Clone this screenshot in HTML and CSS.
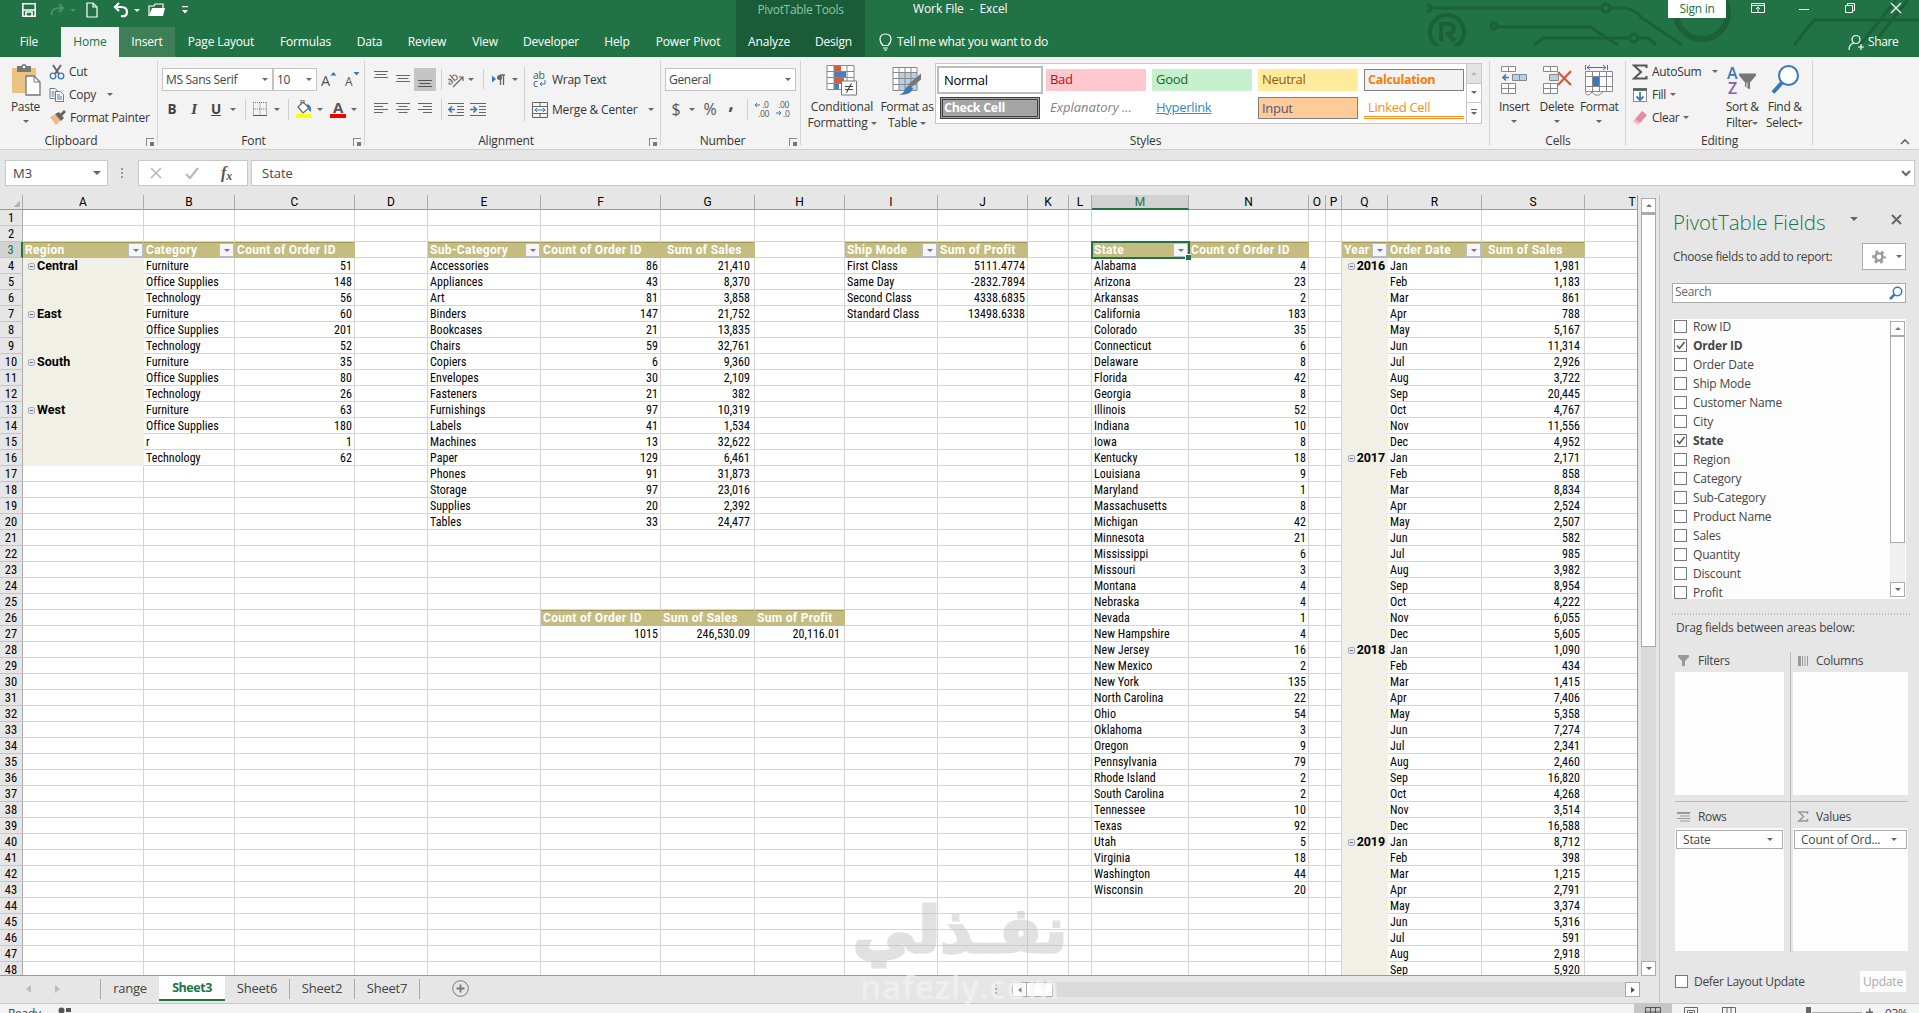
FILE: index.html
```html
<!DOCTYPE html>
<html lang="en">
<head>
<meta charset="utf-8">
<title>Work File - Excel</title>
<link rel="stylesheet" href="styles.css">
</head>
<body>
<div class="app">
  <header class="top">
    <svg class="circuit" width="492" height="46" viewBox="1427 0 492 46" fill="none" stroke="#1b6039" stroke-width="3">
      <circle cx="1428" cy="8" r="3"/><path d="M1432 8H1602M1610 8h16q9 2 16 10l40 27"/><circle cx="1606" cy="8" r="4"/>
      <circle cx="1447" cy="32" r="17" stroke-width="4"/><path d="M1441 41V24h8q6 1 5 6q-1 3-6 4l7 7" stroke-width="4"/>
      <circle cx="1494" cy="26" r="3"/><path d="M1498 27H1590l28 18M1534 45l9-7H1630M1640 38h8l8 7"/><circle cx="1634" cy="38" r="4"/>
      <circle cx="1702" cy="13" r="26" stroke-width="6"/><path d="M1794 45l20-25h105M1860 45l36-45M1872 45l36-45"/>
    </svg>
    <div class="titlebar">
      <div class="qat">
        <svg width="16" height="16" viewBox="0 0 16 16" fill="none" stroke="#fff" stroke-width="1.600"><path d="M1.800 1.800h12.400v12.400H1.800zM2 8h12M5 14v-4h6v4"/></svg>
        <svg width="16" height="16" viewBox="0 0 16 16" fill="none" stroke="#4e9068" stroke-width="2"><path d="M2 13q-2-8 11-7M9 2l4 4-4 4"/></svg>
        <i class="caret dim"></i>
        <svg width="16" height="16" viewBox="0 0 16 16" fill="none" stroke="#fff" stroke-width="1.200"><path d="M3 1h6l4 4v10H3zM9 1v4h4"/></svg>
        <svg width="16" height="16" viewBox="0 0 16 16" fill="none" stroke="#fff" stroke-width="2.200"><path d="M2 5h6q6 0 6 5t-6 4M6 1L2 5l4 4"/></svg>
        <i class="caret light"></i>
        <svg width="18" height="16" viewBox="0 0 18 16"><path d="M1 14V4h5l1-2h8v4" fill="none" stroke="#fff" stroke-width="1.200"/><path d="M4 6h13l-2 8H1z" fill="#fff"/></svg>
        <svg width="8" height="10" viewBox="0 0 8 10" fill="#fff"><path d="M1 1h6v1.300H1zM1 5h6L4 8.500z"/></svg>
      </div>
      <div class="tools-title">PivotTable Tools</div>
      <div class="doc-title">Work File&nbsp; -&nbsp; Excel</div>
      <div class="signin">Sign in</div>
      <div class="winbtns">
        <svg width="14" height="12" viewBox="0 0 14 12" fill="none" stroke="#fff"><path d="M.5 1.500h13v9H.5zM.5 3.500h13M7 10V5M5 7l2-2 2 2"/></svg>
        <svg width="12" height="12" viewBox="0 0 12 12" stroke="#fff"><path d="M1 7.500h10"/></svg>
        <svg width="12" height="12" viewBox="0 0 12 12" fill="none" stroke="#fff"><path d="M1.500 3.500h7v7h-7zM3.500 3V1.500h7v7H9"/></svg>
        <svg width="12" height="12" viewBox="0 0 12 12" stroke="#fff" stroke-width="1.200"><path d="M1 1l10 10M11 1L1 11"/></svg>
      </div>
    </div>
    <nav class="tabs">
      <span>File</span><span class="active">Home</span><span class="hover">Insert</span><span>Page Layout</span><span>Formulas</span><span>Data</span><span>Review</span><span>View</span><span>Developer</span><span>Help</span><span>Power Pivot</span><span class="ctx">Analyze</span><span class="ctx">Design</span>
      <div class="tell"><svg width="13" height="18" viewBox="0 0 13 18" fill="none" stroke="#fff" stroke-width="1.200"><path d="M4 12.500Q1 9.500 1 6.500q0-5.500 5.500-5.500T12 6.500q0 3-3 6zM4 15h5M5 17h3"/></svg>Tell me what you want to do</div>
      <div class="share"><svg width="17" height="17" viewBox="0 0 17 17" fill="none" stroke="#fff" stroke-width="1.200"><circle cx="8" cy="5.500" r="4"/><path d="M1 16q0-6 5-7M13 10v6M10 13h6"/></svg>Share</div>
    </nav>
  </header>

  <section class="ribbon">
    <div class="group g-clip">
      <div class="body">
        <div class="big">
          <svg width="30" height="32" viewBox="0 0 30 32"><path d="M1 4h24v25H1z" fill="#eac282"/><path d="M6 2h4q3-4 6 0h4v6H6z" fill="#777"/><circle cx="13" cy="3" r="1.300" fill="#fff"/><path d="M15 12h8l6 6v13H15z" fill="#fff" stroke="#777" stroke-width="1.300"/><path d="M23 12v6h6" fill="none" stroke="#777"/></svg>
          <span>Paste</span><i class="caret"></i>
        </div>
        <div class="stack">
          <div class="cmd"><svg width="16" height="16" viewBox="0 0 16 16" fill="none"><path d="M4 1l6 9M12 1L6 10" stroke="#666" stroke-width="2"/><circle cx="4" cy="12" r="2.800" stroke="#3b78b5" stroke-width="1.300"/><circle cx="12" cy="12" r="2.800" stroke="#3b78b5" stroke-width="1.300"/></svg>Cut</div>
          <div class="cmd"><svg width="16" height="16" viewBox="0 0 16 16" fill="#fff" stroke="#777"><path d="M1 1.500h5l3 3v7H1z"/><path d="M6.500 4.500h5l3 3v7h-8z"/><path d="M2.500 5h3M2.500 7h3M2.500 9h3M8 8h3M8 10h5M8 12h5" stroke="#3b78b5"/></svg>Copy<i class="caret gap"></i></div>
          <div class="cmd"><svg width="17" height="16" viewBox="0 0 17 16"><path d="M1 7l6-3 5 6-5 5z" fill="#eeb888"/><path d="M6 4l4-2 5 6-3 3z" fill="#666"/><path d="M11 4l4-4 2 2-4 4z" fill="#666"/></svg>Format Painter</div>
        </div>
      </div>
      <div class="label">Clipboard</div><i class="launch"></i>
    </div>

    <div class="group g-font">
      <div class="line l-font1">
        <div class="combo">MS Sans Serif<i class="caret"></i></div>
        <div class="combo">10<i class="caret"></i></div>
        <svg width="16" height="18" viewBox="0 0 16 18"><text x="0" y="15" font-size="14.500" class="glyph">A</text><path d="M9.500 4.500L12.500 1l3 3.500z" fill="#3b78b5"/></svg>
        <svg width="16" height="18" viewBox="0 0 16 18"><text x="1" y="15" font-size="12" class="glyph">A</text><path d="M9.500 1h6l-3 3.500z" fill="#3b78b5"/></svg>
      </div>
      <div class="line l-font2">
        <b class="fmt">B</b><i class="fmt it">I</i><b class="fmt un">U</b><i class="caret"></i><i class="sep"></i>
        <svg width="14" height="14" viewBox="0 0 14 14" fill="none" stroke="#777" stroke-dasharray="1 1"><path d="M.5.500v13M7 .5v13M13.500.500v13M0 .5h14M0 7h14"/><path d="M0 13.500h14" stroke-dasharray="none" stroke="#555"/></svg>
        <i class="caret"></i><i class="sep"></i>
        <svg width="17" height="18" viewBox="0 0 17 18"><path d="M3 7l5-5 6 6-6 5z" fill="#fff" stroke="#666" stroke-width="1.200"/><path d="M6 5V0h3v4" fill="none" stroke="#666"/><path d="M12 4q5 1 4 8q-4-3-4-8z" fill="#3b78b5"/><path d="M1 14h15v4H1z" fill="#ff0"/></svg>
        <i class="caret"></i>
        <svg width="16" height="18" viewBox="0 0 16 18"><text x="3" y="12.500" font-size="15" class="glyph bold">A</text><path d="M0 14h16v4H0z" fill="#f00000"/></svg>
        <i class="caret"></i>
      </div>
      <div class="label">Font</div><i class="launch"></i>
    </div>

    <div class="group g-align">
      <div class="split">
        <div class="left">
          <div class="line l-al1">
            <svg width="14" height="17" viewBox="0 0 14 17" stroke="#666"><path d="M0 .5h14M1.500 3.500h11M0 6.500h14"/></svg>
            <svg width="14" height="17" viewBox="0 0 14 17" stroke="#666"><path d="M0 4.500h14M1.500 7.500h11M0 10.500h14"/></svg>
            <div class="pressed"><svg width="14" height="17" viewBox="0 0 14 17" stroke="#555"><path d="M0 9.500h14M1.500 12.500h11M0 15.500h14"/></svg></div>
            <i class="sep"></i>
            <svg width="17" height="16" viewBox="0 0 17 16"><text x="-2" y="10" font-size="11" class="glyph" transform="rotate(-40 5 7)">ab</text><path d="M5 15L15 5M11 5h4v4" fill="none" stroke="#666" stroke-width="1.200"/></svg>
            <i class="caret"></i><i class="sep"></i>
            <svg width="14" height="12" viewBox="0 0 14 12"><path d="M0 1.500l4 3.500-4 3.500z" fill="#3b78b5"/><path d="M8.500 1v10M11.500 1v10M13 1H8" stroke="#666" fill="none" stroke-width="1.300"/><circle cx="7.500" cy="3.500" r="2.500" fill="#666"/></svg>
            <i class="caret"></i>
          </div>
          <div class="line l-al2">
            <svg width="14" height="12" viewBox="0 0 14 12" stroke="#666"><path d="M0 .5h14M0 3.500h9M0 6.500h14M0 9.500h9"/></svg>
            <svg width="14" height="12" viewBox="0 0 14 12" stroke="#666"><path d="M0 .5h14M2.500 3.500h9M0 6.500h14M2.500 9.500h9"/></svg>
            <svg width="14" height="12" viewBox="0 0 14 12" stroke="#666"><path d="M0 .5h14M5 3.500h9M0 6.500h14M5 9.500h9"/></svg>
            <i class="sep"></i>
            <svg width="16" height="13" viewBox="0 0 16 13" fill="none" stroke="#666"><path d="M0 .5h16M9 3.500h7M9 6.500h7M9 9.500h7M0 12.500h16"/><path d="M7 6.500H1M4 3.500l-3 3 3 3" stroke="#3b78b5" stroke-width="1.600"/></svg>
            <svg width="16" height="13" viewBox="0 0 16 13" fill="none" stroke="#666"><path d="M0 .5h16M9 3.500h7M9 6.500h7M9 9.500h7M0 12.500h16"/><path d="M0 6.500h6M3.500 3.500l3 3-3 3" stroke="#3b78b5" stroke-width="1.600"/></svg>
          </div>
        </div>
        <i class="sep tall"></i>
        <div class="right">
          <div class="cmd"><svg width="16" height="17" viewBox="0 0 16 17"><text x="1" y="8" font-size="10.500" class="glyph">ab</text><text x="1" y="16" font-size="10.500" class="glyph">c</text><path d="M13 9v4H8M10 11l-2 2 2 2" fill="none" stroke="#3b78b5"/></svg>Wrap Text</div>
          <div class="cmd"><svg width="16" height="16" viewBox="0 0 16 16" fill="none" stroke="#666"><path d="M.5.500h15v15H.5zM.5 4.500h15M.5 11.500h15M8 .5v4M8 11.500v4"/><path d="M2.500 8h11M5 6L3 8l2 2M11 6l2 2-2 2" stroke="#3b78b5"/></svg>Merge &amp; Center<i class="caret gap"></i></div>
        </div>
      </div>
      <div class="label">Alignment</div><i class="launch"></i>
    </div>

    <div class="group g-num">
      <div class="line l-num1"><div class="combo">General<i class="caret"></i></div></div>
      <div class="line l-num2">
        <span class="sym">$</span><i class="caret"></i><span class="sym">%</span><b class="sym comma">,</b><i class="sep"></i>
        <svg width="16" height="16" viewBox="0 0 16 16"><text x="8" y="7" font-size="8.500" class="glyph">.0</text><text x="4" y="15.500" font-size="8.500" class="glyph">.00</text><path d="M6 4H1M3 2L1 4l2 2" fill="none" stroke="#3b78b5"/></svg>
        <svg width="16" height="16" viewBox="0 0 16 16"><text x="3" y="7" font-size="8.500" class="glyph">.00</text><text x="8" y="15.500" font-size="8.500" class="glyph">.0</text><path d="M1 12h5M4 10l2 2-2 2" fill="none" stroke="#3b78b5"/></svg>
      </div>
      <div class="label">Number</div><i class="launch"></i>
    </div>

    <div class="group g-styles">
      <div class="body">
        <div class="big w72">
          <svg width="32" height="31" viewBox="0 0 32 31"><path d="M1 1h27v24H1z" fill="#fff"/><path d="M8 1h7v6H8z" fill="#d9593a"/><path d="M8 7h12v6H8z" fill="#4a80b8"/><path d="M8 13h10v6H8z" fill="#d9593a"/><path d="M8 19h5v6H8z" fill="#4a80b8"/><path d="M1 1h27v24H1zM8 1v24M21 1v24M1 7h27M1 13h27M1 19h27" fill="none" stroke="#888"/><path d="M15.500 16.500h15v14h-15z" fill="#fff" stroke="#777"/><path d="M19 22h8M19 25h8M25.500 19l-5 9" stroke="#444" stroke-width="1.200"/></svg>
          <span>Conditional</span><span>Formatting<i class="caret in"></i></span>
        </div>
        <div class="big w56">
          <svg width="32" height="31" viewBox="0 0 32 31"><path d="M2 3h24v23H2z" fill="#fff"/><path d="M8 8h18v18H8z" fill="#b6d0e6"/><path d="M2 3h24v23H2zM8 3v23M14 3v23M20 3v23M2 8h24M2 14h24M2 20h24" fill="none" stroke="#888"/><path d="M30 9v6L20 23l-3-3z" fill="#777"/><path d="M18 21l4 3q-2 7-14 6q5-1 6-5q1-3 4-4z" fill="#3b78b5"/></svg>
          <span>Format as</span><span>Table<i class="caret in"></i></span>
        </div>
        <div class="gallery">
          <div class="swatches">
            <span class="s normal">Normal</span><span class="s bad">Bad</span><span class="s good">Good</span><span class="s neutral">Neutral</span><span class="s calc">Calculation</span>
            <span class="s check">Check Cell</span><span class="s expl">Explanatory ...</span><span class="s hyper">Hyperlink</span><span class="s input">Input</span><span class="s linked">Linked Cell</span>
          </div>
          <div class="gscroll"><span class="off"><i class="caret up"></i></span><span><i class="caret"></i></span><span class="more"><i class="caret"></i></span></div>
        </div>
      </div>
      <div class="label">Styles</div>
    </div>

    <div class="group g-cells">
      <div class="body">
        <div class="big w42">
          <svg width="28" height="30" viewBox="0 0 28 30" fill="#fff" stroke="#888"><path d="M1.500 1.500h14v5h-14zM8.500 1.500v5M1.500 18.500h14v10h-14zM8.500 18.500v10M1.500 23.500h14"/><path d="M12.500 9.500h14v6h-14zM19.500 9.500v6" fill="#b6cfe3"/><path d="M9 12.500H3M6 9.500l-3 3 3 3" fill="none" stroke="#3b78b5" stroke-width="1.700"/></svg>
          <span>Insert</span><i class="caret"></i>
        </div>
        <div class="big w42">
          <svg width="30" height="30" viewBox="0 0 30 30" fill="#fff" stroke="#888"><path d="M1.500 1.500h14v5h-14zM8.500 1.500v5M1.500 18.500h14v10h-14zM8.500 18.500v10M1.500 23.500h14"/><path d="M7.500 9.500h9v6h-9z" fill="#b6cfe3"/><path d="M16 7l13 13M29 6L16 20" stroke="#d9593a" stroke-width="2.300"/></svg>
          <span>Delete</span><i class="caret"></i>
        </div>
        <div class="big w42">
          <svg width="30" height="32" viewBox="0 0 30 32" fill="#fff" stroke="#888"><path d="M1.500 7.500h27v20h-27zM8.500 7.500v20M15.500 7.500v20M22.500 7.500v20M1.500 12.500h27M1.500 22.500h27"/><path d="M8.500 12.500h7v10h-7z" fill="#3b78b5"/><path d="M2 28q-1 3 3 3l3-3 3 3h4l4-3" /><path d="M1.500 1v5M23.500 1v5M3 3.500h19M6 1L3 3.500 6 6M19 1l3 2.500L19 6" fill="none" stroke="#3b78b5"/></svg>
          <span>Format</span><i class="caret"></i>
        </div>
      </div>
      <div class="label">Cells</div>
    </div>

    <div class="group g-edit">
      <div class="body">
        <div class="stack">
          <div class="cmd"><svg width="16" height="16" viewBox="0 0 16 16" fill="none" stroke="#555" stroke-width="2"><path d="M14.500 4V1.500H2L9 8l-7 6.500h12.500V12"/></svg>AutoSum<i class="caret gap"></i></div>
          <div class="cmd"><svg width="16" height="16" viewBox="0 0 16 16"><path d="M1.500 1.500h13v13h-13z" fill="#fff" stroke="#888"/><path d="M1 1h14v3H1z" fill="#666"/><path d="M8 5v8M4.500 9.500L8 13l3.500-3.500" fill="none" stroke="#3b78b5" stroke-width="1.800"/></svg>Fill<i class="caret in"></i></div>
          <div class="cmd"><svg width="16" height="16" viewBox="0 0 16 16"><path d="M10 1l5 4-7 8-5-4z" fill="#e58a9f"/><path d="M3 9l5 4-2 2-5-4z" fill="#f3b9c5"/></svg>Clear<i class="caret in"></i></div>
        </div>
        <div class="big w42">
          <svg width="30" height="31" viewBox="0 0 30 31"><text x="0" y="14" font-size="16" font-weight="600" fill="#3b78b5">A</text><text x="1" y="29" font-size="16" font-weight="600" fill="#8a5bb0">Z</text><path d="M12 9h17v2l-6 7v7l-5 -3v-4l-6-7z" fill="#777"/><path d="M20 18v5" stroke="#fff"/></svg>
          <span>Sort &amp;</span><span>Filter<i class="caret in"></i></span>
        </div>
        <div class="big w42">
          <svg width="30" height="31" viewBox="0 0 30 31"><circle cx="18.500" cy="11" r="9.500" fill="#fff" stroke="#3b78b5" stroke-width="2"/><path d="M12 18L3 28" stroke="#3b78b5" stroke-width="4"/></svg>
          <span>Find &amp;</span><span>Select<i class="caret in"></i></span>
        </div>
      </div>
      <div class="label">Editing</div>
    </div>
    <svg class="collapse" width="10" height="7" viewBox="0 0 10 7" fill="none" stroke="#666" stroke-width="1.600"><path d="M1 6l4-4 4 4"/></svg>
  </section>

  <section class="fbar">
    <div class="box name">M3<i class="caret big-c"></i></div>
    <svg width="3" height="12" viewBox="0 0 3 12" fill="#999"><path d="M0 1h2v2H0zM0 5h2v2H0zM0 9h2v2H0z"/></svg>
    <div class="box fx">
      <svg width="12" height="12" viewBox="0 0 12 12" stroke="#b9b9b9" stroke-width="1.600"><path d="M1 1l10 10M11 1L1 11"/></svg>
      <svg width="14" height="12" viewBox="0 0 14 12" fill="none" stroke="#b9b9b9" stroke-width="2.200"><path d="M1 7l4 4L13 1"/></svg>
      <span class="fxt">f<sub>x</sub></span>
    </div>
    <div class="box formula">State<svg width="10" height="7" viewBox="0 0 10 7" fill="none" stroke="#666" stroke-width="2"><path d="M1 1l4 4 4-4"/></svg></div>
  </section>

  <main class="work">
    <div class="book">
      <div class="gridrow">
        <div class="viewport"><table class="sheet" id="sheet"></table></div>
        <div class="vscroll"><span class="btn"><i class="caret up"></i></span><span class="thumb"></span><span class="track"></span><span class="btn"><i class="caret"></i></span></div>
      </div>
      <div class="sheetbar">
        <svg class="nav" width="40" height="10" viewBox="0 0 40 10" fill="#bdbdbd"><path d="M9 1v8L4 5zM33 1v8l5-4z"/></svg>
        <div class="sheets"><span>range</span><span class="on">Sheet3</span><span>Sheet6</span><span>Sheet2</span><span>Sheet7</span></div>
        <svg class="plus" width="17" height="17" viewBox="0 0 17 17" fill="none" stroke="#777"><circle cx="8.500" cy="8.500" r="7.800"/><path d="M8.500 4.500v8M4.500 8.500h8" stroke-width="1.800"/></svg>
        <svg class="grip" width="3" height="12" viewBox="0 0 3 12" fill="#aaa"><path d="M0 1h2v2H0zM0 5h2v2H0zM0 9h2v2H0z"/></svg>
        <div class="hscroll"><span class="btn"><i class="caret lf"></i></span><span class="hthumb"></span><span class="track"></span><span class="btn"><i class="caret rt"></i></span></div>
      </div>
      <div class="mark"><div class="mark-ar" lang="ar">نفـذلي</div><div class="mark-en">nafezly.com</div></div>
    </div>

    <aside class="panel">
      <div class="p-head"><h1>PivotTable Fields</h1><i class="caret big-c"></i><svg width="11" height="11" viewBox="0 0 11 11" stroke="#666" stroke-width="2"><path d="M1 1l9 9M10 1l-9 9"/></svg></div>
      <div class="p-choose"><span>Choose fields to add to report:</span><div class="gear"><svg width="14" height="14" viewBox="0 0 14 14" fill="none" stroke="#999"><circle cx="7" cy="7" r="3.600" stroke-width="2.400"/><circle cx="7" cy="7" r="5.700" stroke-width="2.200" stroke-dasharray="3 2.970" stroke-dashoffset="1.500"/></svg><i class="caret big-c"></i></div></div>
      <div class="search">Search<svg width="14" height="14" viewBox="0 0 14 14" fill="none" stroke="#3b78b5"><circle cx="8.500" cy="5.500" r="4.200" stroke-width="1.500"/><path d="M5.500 8.500L1 13" stroke-width="2.500"/></svg></div>
      <div class="fields">
        <ul id="fields"></ul>
        <div class="fscroll"><span class="btn"><i class="caret up"></i></span><span class="fthumb"></span><span class="ftrack"></span><span class="btn"><i class="caret"></i></span></div>
      </div>
      <div class="dots"></div>
      <div class="drag">Drag fields between areas below:</div>
      <div class="areas">
        <div class="area"><h2><svg width="13" height="12" viewBox="0 0 13 12" fill="#999"><path d="M1 0h11v2L8 6v5H5V6L1 2z"/></svg>Filters</h2><div class="drop"></div></div>
        <div class="area r"><h2><svg width="13" height="12" viewBox="0 0 13 12" fill="#999"><path d="M1 1h3v10H1zM5 1h1v10H5zM7.500 1h1v10h-1zM10 1h1v10h-1z"/></svg>Columns</h2><div class="drop"></div></div>
        <div class="area b"><h2><svg width="13" height="12" viewBox="0 0 13 12" fill="#999"><path d="M0 1h13v2H0zM3 4.500h10v1H3zM0 7h13v1H0zM3 9.500h10v1H3z"/></svg>Rows</h2><div class="drop"><div class="pill">State<i class="caret big-c"></i></div></div></div>
        <div class="area r b"><h2><svg width="13" height="12" viewBox="0 0 13 12" fill="none" stroke="#999" stroke-width="1.600"><path d="M10.500 3V1H2l4.500 4.500L2 10h8.500V8"/></svg>Values</h2><div class="drop"><div class="pill">Count of Ord...<i class="caret big-c"></i></div></div></div>
      </div>
      <div class="defer"><i class="cb"></i><span>Defer Layout Update</span><button class="upd">Update</button></div>
    </aside>
  </main>

  <footer class="status">
    <span class="ready">Ready</span>
    <svg width="14" height="10" viewBox="0 0 14 10" fill="#555"><circle cx="3.500" cy="3.500" r="3"/><path d="M8 1h5v4H8zM1 7h12v1H1z"/></svg>
    <div class="views">
      <span class="v on"><svg width="16" height="14" viewBox="0 0 16 14" fill="none" stroke="#555"><path d="M.5.500h15v13H.5zM5.500 0v14M10.500 0v14M0 5h16M0 9.500h16"/></svg></span>
      <span class="v"><svg width="14" height="14" viewBox="0 0 14 14" fill="none" stroke="#666"><path d="M.5.500h13v13H.5zM3.500 3.500h7v10M3.500 3.500v10M5 5.500h4M5 7.500h4"/></svg></span>
      <span class="v"><svg width="14" height="14" viewBox="0 0 14 14" fill="none" stroke="#666"><path d="M.5.500h13v13M.5 0v14M5 .5v7h4v-7"/></svg></span>
    </div>
    <svg class="zoombar" width="80" height="12" viewBox="0 0 80 12" fill="#666"><path d="M4 1h5v10H4zM10 6h50v.6H10zM64 5.500h7v1.500h-7zM67 2.500h1.500v7.500H67z"/></svg>
    <span class="pct">93%</span>
  </footer>
</div>
<script src="sheet.js"></script>
</body>
</html>
```
FILE: styles.css
```css
* { box-sizing: border-box; }
body { margin: 0; font-family: "Open Sans", sans-serif; font-size: 12px; letter-spacing: -.3px; color: #333; background: #e6e6e6; }
i { font-style: normal; }
svg { display: block; flex: none; }
.app { width: 1919px; height: 1013px; overflow: hidden; display: flex; flex-direction: column; }

.caret { display: inline-block; flex: none; width: 0; height: 0; border: 3px solid transparent; border-top: 3.500px solid #666; border-bottom: 0; }
.caret.up { border-bottom: 3.500px solid #777; border-top: 0; }
.caret.lf { border: 3.500px solid transparent; border-right: 4px solid #777; border-left: 0; }
.caret.rt { border: 3.500px solid transparent; border-left: 4px solid #555; border-right: 0; }
.caret.light { border-top-color: #fff; }
.caret.dim { border-top-color: #4e9068; }
.caret.in { margin-left: 3px; vertical-align: 2px; }
.caret.gap { margin-left: 7px; }
.caret.big-c { border-width: 4.500px 4.500px 0; }
.glyph { font-family: "Open Sans", sans-serif; fill: #555; }
.bold { font-weight: 700; }

/* Title bar and tabs */
.top { height: 57px; background: #217346; color: #fff; position: relative; flex: none; }
.circuit { position: absolute; left: 1427px; top: 0; }
.titlebar, .tabs { position: relative; display: flex; }
.titlebar { height: 27px; letter-spacing: -.1px; }
.titlebar > div { flex: none; }
.qat { width: 736px; height: 20px; display: grid; grid-template-columns: 37px 29px 10px 24px 29px 11px 26px 23px; align-items: center; justify-items: end; }
.tools-title { width: 129px; padding-top: 1px; background: #1a5c38; color: #8fc3a5; text-align: center; line-height: 17px; letter-spacing: -.3px; }
.doc-title { width: 803px; padding-left: 48px; line-height: 18px; }
.signin { width: 58px; height: 18px; background: #fff; color: #217346; text-align: center; line-height: 18px; letter-spacing: -.3px; }
.winbtns { display: grid; grid-template-columns: repeat(4, 46px); padding-left: 9px; height: 16px; align-items: center; justify-items: center; }
.tabs { height: 30px; line-height: 30px; letter-spacing: -.15px; }
.tabs > span { text-align: center; flex: none; }
.tabs > span:nth-child(1) { width: 61px; padding-right: 3px; }
.tabs > span:nth-child(2) { width: 58px; }
.tabs > span:nth-child(3) { width: 56px; }
.tabs > span:nth-child(4) { width: 92px; }
.tabs > span:nth-child(5) { width: 77px; }
.tabs > span:nth-child(6) { width: 51px; }
.tabs > span:nth-child(7) { width: 64px; }
.tabs > span:nth-child(8) { width: 52px; }
.tabs > span:nth-child(9) { width: 80px; }
.tabs > span:nth-child(10) { width: 52px; }
.tabs > span:nth-child(11) { width: 93px; padding-right: 3px; }
.tabs > span:nth-child(12) { width: 66px; }
.tabs > span:nth-child(13) { width: 63px; }
.tabs .active { background: #f3f3f3; color: #217346; }
.tabs .hover { background: #3f7f58; }
.tabs .ctx { background: #1a5c38; }
.tell { display: flex; align-items: center; gap: 5px; padding-left: 14px; width: 983px; letter-spacing: -.25px; }
.share { display: flex; align-items: center; gap: 3px; letter-spacing: -.35px; }

/* Ribbon */
.ribbon { height: 93px; flex: none; background: #f3f3f3; border-bottom: 1px solid #cfcfcf; display: flex; position: relative; }
.group { position: relative; flex: none; padding-top: 5px; }
.group::after { content: ""; position: absolute; right: 0; top: 4px; height: 84px; width: 1px; background: #d4d4d4; }
.g-clip { width: 158px; }
.g-font { width: 207px; padding-left: 4px; }
.g-align { width: 296px; }
.g-num { width: 140px; padding-left: 4px; }
.g-styles { width: 689px; padding-left: 4px; }
.g-cells { width: 136px; padding-left: 3px; }
.g-edit { width: 187px; }
.label { position: absolute; left: 0; right: 0; top: 75px; text-align: center; line-height: 18px; letter-spacing: -.15px; }
.g-clip .label { right: 16px; }
.g-font .label { right: 16px; }
.g-align .label { right: 14px; }
.g-num .label { right: 17px; }
.launch { position: absolute; right: 4px; top: 81px; width: 8px; height: 8px; border-left: 1px solid #888; border-top: 1px solid #888; background: linear-gradient(#777, #777) right bottom / 4px 4px no-repeat; }
.body, .split { display: flex; height: 70px; }
.big { display: flex; flex-direction: column; align-items: center; line-height: 16px; padding-top: 2px; white-space: nowrap; }
.big > svg { height: 32px; margin-bottom: 3px; }
.big > .caret { margin-top: 5px; }
.g-clip .big { width: 49px; padding-left: 2px; }
.w72 { width: 74px; letter-spacing: -.15px; } .w56 { width: 56px; } .w42 { width: 42.500px; }
.cmd { display: flex; align-items: center; height: 23px; gap: 4px; white-space: nowrap; }
.stack { margin-top: -2px; }
.g-edit .stack { width: 95px; padding-left: 6px; }
.g-edit .caret.in { margin-left: 0; }
.line { display: grid; align-items: center; justify-items: center; }
.l-font1, .l-num1, .l-al1 { height: 23px; margin-top: 6px; }
.l-font2, .l-num2, .l-al2 { height: 26px; margin-top: 5px; }
.l-font1 { grid-template-columns: 111px 44px 24px 22px; }
.l-font2 { grid-template-columns: 20px 24px 20px 14px 10px 20px 14px 8px 22px 12px 23px 10px; }
.l-al1 { grid-template-columns: 24px 20px 24px 8px 22px 8px 16px 16px 16px; }
.l-al2 { grid-template-columns: 24px 20px 24px 8px 22px 22px; }
.l-num1 { grid-template-columns: 131px; }
.l-num2 { grid-template-columns: 22px 10px 26px 16px 16px 14px 28px; }
.combo { width: 100%; height: 23px; background: #fff; border: 1px solid #c4c4c4; display: flex; align-items: center; justify-content: space-between; padding: 0 4px 0 3px; color: #444; }
.fmt { font-size: 13.500px; color: #444; }
.it { font: italic 600 15px "Liberation Serif", serif; }
.un { text-decoration: underline; }
.sep { width: 1px; height: 21px; background: #d0d0d0; }
.sep.tall { height: 55px; margin-top: 5px; }
.left { width: 159px; padding-left: 4px; }
.right { padding: 6px 0 0 7px; }
.right .cmd { height: 23px; gap: 4px; }
.right .cmd + .cmd { margin-top: 7px; letter-spacing: -.2px; }
.pressed { width: 22px; height: 23px; background: #c5c5c5; display: grid; place-items: center; }
.sym { font-size: 16px; color: #555; }
.comma { font-size: 20px; line-height: 10px; transform: translateY(-7px); }
.gallery { display: flex; width: 547px; height: 61px; margin-top: 1px; border: 1px solid #c6c6c6; background: #fff; }
.swatches { display: grid; grid-template-columns: repeat(5, 100px); grid-template-rows: 22px 22px; gap: 6px; padding: 5px 0 0 4px; width: 531px; }
.s { padding-left: 4px; line-height: 20px; font-size: 13px; white-space: nowrap; }
.normal { background: #fff; color: #000; outline: 2px solid #bcbcbc; outline-offset: 1px; border: 1px solid #fff; padding-left: 3px; }
.bad { background: #ffc7ce; color: #b01020; }
.good { background: #c6efce; color: #126b1c; }
.neutral { background: #ffeb9c; color: #9c5700; }
.calc { background: #f2f2f2; border: 1px solid #7f7f7f; color: #fa7d00; font-weight: 700; padding-left: 3px; font-size: 12.500px; }
.check { background: #a5a5a5; border: 3px double #3f3f3f; color: #fff; font-weight: 700; line-height: 16px; padding-left: 1px; font-size: 12.500px; }
.expl { color: #7f7f7f; font-style: italic; letter-spacing: 0; }
.hyper { color: #2f8ac6; text-decoration: underline; }
.input { background: #ffcc99; border: 1px solid #7f7f7f; color: #5a5376; padding-left: 3px; }
.linked { color: #fa8d20; border-bottom: 3px double #fa8d20; }
.gscroll { width: 15px; display: grid; grid-template-rows: 1fr 1fr 1fr; border-left: 1px solid #c6c6c6; }
.gscroll span { display: grid; place-items: center; border-bottom: 1px solid #c6c6c6; }
.gscroll .off { background: #e3e3e3; }
.gscroll .off .caret { border-bottom-color: #b5b5b5; }
.gscroll .more { border-bottom: 0; background: linear-gradient(#666, #666) center 6px / 6px 1px no-repeat; }
.collapse { position: absolute; right: 9px; bottom: 4px; }

/* Formula bar */
.fbar { height: 45px; flex: none; display: flex; align-items: flex-start; padding: 10px 4px 0 5px; font-size: 13px; color: #444; letter-spacing: 0; }
.box { height: 26px; background: #fff; border: 1px solid #c8c8c8; display: flex; align-items: center; }
.fbar > svg { margin: 7px 14px 0 13px; }
.name { width: 103px; justify-content: space-between; padding: 0 6px 0 7px; }
.fx { width: 110px; padding-left: 11px; gap: 23px; }
.fxt { font: italic 700 16px "Liberation Serif", serif; color: #555; line-height: 20px; margin-left: -1px; }
.fxt sub { font-size: 12px; vertical-align: -2px; line-height: 0; }
.formula { flex: 1; margin-left: 3px; padding: 0 3px 0 10px; justify-content: space-between; }

/* Grid */
.work { display: flex; height: 808px; flex: none; }
.book { width: 1659px; position: relative; }
.gridrow { display: flex; height: 781px; }
.viewport { width: 1638px; height: 781px; overflow: hidden; border-right: 1px solid #999; border-bottom: 1px solid #999; }
.sheet { border-collapse: separate; border-spacing: 0; table-layout: fixed; width: 1680px; background: #fff; font-family: Roboto, sans-serif; font-stretch: 75%; font-size: 12px; color: #000; }
.sheet tr { height: 16px; }
.sheet tr.head { height: 15px; }
.sheet th, .sheet td { padding: 1px 2px 0; border-right: 1px solid #d4d4d4; border-bottom: 1px solid #d4d4d4; line-height: 14px; height: 16px; white-space: nowrap; overflow: hidden; text-align: left; font-weight: 400; letter-spacing: .05px; }
.sheet .head th { height: 15px; line-height: 13px; background: #e6e6e6; text-align: center; border-color: #ababab; border-bottom-color: #999; font-size: 12px; font-stretch: 100%; }
.sheet th.num { background: #e6e6e6; border-right-color: #ababab; border-bottom-color: #c6c6c6; text-align: center; font-size: 12.500px; }
.sheet .head th.sel { background: #d2d2d2; color: #217346; border-bottom: 2px solid #217346; line-height: 12px; }
.sheet th.num.sel { background: #d2d2d2; color: #217346; border-right: 2px solid #217346; }
.sheet .corner { background: linear-gradient(135deg, transparent 50%, #b5b5b5 50%) 14px 5px / 6px 7px no-repeat #e6e6e6 !important; border-bottom-color: #ababab; }
.sheet td.right { text-align: right; }
.sheet td.money { padding-right: 4px; }
.sheet td.ph { background: #c4bc80; border-color: #c4bc80; color: #fff; font-weight: 700; font-stretch: 100%; letter-spacing: .3px; box-shadow: inset 0 1px #a39a55; }
.sheet td.pad { padding-left: 6px; }
.sheet td.fill { background: #f0f0e6; border-color: #f0f0e6; font-weight: 700; font-size: 12.500px; font-stretch: 100%; }
.sheet td.yr { text-align: right; letter-spacing: -.1px; }
.cell { display: flex; align-items: center; height: 14px; justify-content: space-between; margin-right: -2px; }
.drop-btn { width: 15px; height: 14px; flex: none; background: #f6f6fa; border: 1px solid #b9bccb; display: grid; place-items: center; }
.drop-btn::after { content: ""; border: 3px solid transparent; border-top: 3px solid #777; border-bottom: 0; }
.tog { display: inline-block; width: 7px; height: 7px; margin: 0 2px 0 3px; border: 1px solid #a6aac4; border-radius: 2px; background: linear-gradient(#667, #667) center / 3px 1px no-repeat #e8e9f2; }
.sheet td.active { outline: 2px solid #217346; outline-offset: -1px; position: relative; overflow: visible; }
.sheet td.active::after { content: ""; position: absolute; right: -3px; bottom: -3px; width: 5px; height: 5px; background: #217346; border: 1px solid #fff; border-right: 0; border-bottom: 0; box-sizing: content-box; }

.btn { width: 15px; height: 15px; background: #fff; border: 1px solid #ababab; display: grid; place-items: center; flex: none; }
.vscroll { width: 15px; margin: 3px 0 0 3px; height: 778px; display: flex; flex-direction: column; }
.thumb { height: 434px; background: #fff; border: 1px solid #ababab; border-top-width: 2px; }
.track { flex: 1; background: #dadada; }

.sheetbar { height: 27px; display: flex; align-items: flex-start; padding-left: 22px; }
.nav { margin: 8px 38px 0 0; }
.sheets { display: flex; font-size: 13px; color: #444; border-left: 1px solid #aaa; height: 20px; margin-top: 3px; letter-spacing: -.25px; }
.sheets span { width: 65px; text-align: center; border-right: 1px solid #aaa; height: 20px; line-height: 18px; }
.sheets span:first-child { width: 58px; border: 0; }
.sheets .on { width: 66px; height: 25px; margin-top: -3px; line-height: 24px; background: #fff; color: #217346; font-weight: 700; font-size: 12.500px; letter-spacing: -.45px; border: 0; border-bottom: 2px solid #217346; }
.plus { margin: 4px 0 0 32px; }
.grip { margin: 7px 0 0 526px; }
.hscroll { display: flex; margin: 6px 0 0 14px; width: 628px; height: 15px; }
.hthumb { width: 26px; background: #fff; border: 1px solid #ababab; border-left: 0; }

/* Watermark over the lower part of the grid */
.mark { position: absolute; left: 852px; top: 696px; width: 216px; height: 112px; text-align: center; pointer-events: none; white-space: nowrap; }
.mark-ar { font: 700 63px/80px "DejaVu Sans", sans-serif; color: #c4c4c4; -webkit-text-stroke: 3px #c4c4c4; opacity: .5; letter-spacing: 0; }
.mark-en { font: 600 33px/32px "Open Sans", sans-serif; letter-spacing: .8px; color: #f4f4f4; opacity: .7; }

/* Field list */
.panel { width: 260px; border-left: 1px solid #c3c3c3; padding: 0 12px; color: #444; }
.p-head { display: flex; height: 48px; align-items: center; padding: 6px 5px 0 1px; }
.p-head h1 { margin: 0; font-weight: 300; font-size: 20.500px; letter-spacing: 0; color: #217346; flex: none; width: 177px; white-space: nowrap; }
.p-head .caret { margin-top: -6px; }
.p-head > svg { margin: -6px 0 0 auto; }
.p-choose { display: flex; justify-content: space-between; height: 27px; align-items: center; padding-left: 1px; letter-spacing: -.35px; }
.p-choose span { white-space: nowrap; }
.gear { width: 44px; height: 27px; background: #fff; border: 1px solid #ababab; display: flex; align-items: center; gap: 10px; padding-left: 9px; margin-right: 1px; }
.gear .caret { border-width: 3.500px 3.500px 0; }
.search { margin: 13px 1px 0 0; height: 20px; background: #fff; border: 1px solid #ababab; display: flex; justify-content: space-between; align-items: center; padding: 0 2px 3px; color: #666; }
.search svg { margin-top: 3px; }
.fields { margin: 16px 1px 0 0; height: 280px; background: #fdfdfd; display: flex; justify-content: space-between; overflow: hidden; padding-right: 1px; }
.fields ul { list-style: none; margin: -2px 0 0; padding: 0 0 0 2px; letter-spacing: -.2px; }
.fields li { height: 19px; display: flex; align-items: center; gap: 6px; line-height: 19px; }
.fields li.on { font-weight: 700; }
.cb { width: 13px; height: 13px; border: 1px solid #777; background: #fff; flex: none; display: block; }
.fscroll { width: 15px; margin: 2px 0; display: flex; flex-direction: column; }
.fthumb { height: 207px; background: #fff; border: 1px solid #ababab; }
.ftrack { flex: 1; background: #f0f0f0; }
.dots { margin: 14px -5px 0 0; height: 2px; background: repeating-linear-gradient(90deg, #bbb 0 1px, transparent 1px 3px); }
.drag { margin: 4px 0 0 4px; line-height: 18px; letter-spacing: -.2px; }
.areas { margin: 15px -1px 0 3px; display: grid; grid-template-columns: 116px 117px; }
.area { height: 149px; padding-right: 6px; border-right: 1px solid #bbb; }
.area.r { padding: 0 0 0 2px; border-right: 0; }
.area.b { border-top: 1px solid #bbb; padding-top: 6px; height: 151px; }
.area h2 { margin: 0; height: 20px; padding: 0 0 3px 2px; font-size: 12px; font-weight: 400; display: flex; align-items: center; gap: 8px; }
.area.r h2 { padding-left: 4px; gap: 6px; }
.drop { height: 123px; background: #fdfdfd; padding: 2px 1px; }
.pill { height: 19px; border: 1px solid #ababab; background: #fff; display: flex; justify-content: space-between; align-items: center; padding: 0 9px 0 6px; white-space: nowrap; letter-spacing: -.2px; }
.pill .caret { border-width: 3.500px 3.500px 0; }
.defer { margin: 18px 0 0 3px; display: flex; align-items: center; height: 22px; gap: 6px; }
.upd { margin: 0 1px 0 auto; width: 46px; height: 21px; border: 0; padding: 0; background: #fdfdfd; color: #aaa; font: inherit; letter-spacing: -.2px; }

/* Status bar */
.status { height: 10px; flex: none; background: #f3f3f3; border-top: 1px solid #c6c6c6; display: flex; align-items: flex-start; overflow: hidden; color: #444; }
.ready { padding-left: 8px; width: 58px; line-height: 20px; }
.status > svg { margin-top: 3px; }
.views { display: flex; margin-left: 1562px; }
.v { width: 38px; height: 10px; display: flex; justify-content: center; padding-top: 3px; }
.v.on { background: #c6c6c6; }
.status .zoombar { margin: 2px 0 0 54px; }
.pct { line-height: 20px; margin-left: 3px; }
```
FILE: sheet.js
```js
const cols = 'ABCDEFGHIJKLMNOPQRST'.split('');
const widths = [121, 91, 120, 73, 113, 120, 94, 90, 93, 90, 41, 23, 97, 120, 17, 16, 46, 94, 103, 95];
const cells = {};
const put = (ref, text, cls = '', extra = {}) => { cells[ref] = { text, cls, ...extra }; };
const column = (col, start, values, cls) => values.forEach((v, i) => put(col + (start + i), v, cls));

// Pivot 1: region / category
put('A3', 'Region', 'ph', { drop: true });
put('B3', 'Category', 'ph', { drop: true });
put('C3', 'Count of Order ID', 'ph');
for (let r = 4; r <= 16; r++) put('A' + r, '', 'fill');
[[4, 'Central'], [7, 'East'], [10, 'South'], [13, 'West']].forEach(([r, t]) => put('A' + r, t, 'fill', { tog: true }));
const kinds = ['Furniture', 'Office Supplies', 'Technology'];
column('B', 4, [...kinds, ...kinds, ...kinds, 'Furniture', 'Office Supplies', 'r', 'Technology']);
column('C', 4, [51, 148, 56, 60, 201, 52, 35, 80, 26, 63, 180, 1, 62], 'right');

// Pivot 2: sub-category
put('E3', 'Sub-Category', 'ph', { drop: true });
put('F3', 'Count of Order ID', 'ph');
put('G3', 'Sum of Sales', 'ph pad');
column('E', 4, 'Accessories,Appliances,Art,Binders,Bookcases,Chairs,Copiers,Envelopes,Fasteners,Furnishings,Labels,Machines,Paper,Phones,Storage,Supplies,Tables'.split(','));
column('F', 4, [86, 43, 81, 147, 21, 59, 6, 30, 21, 97, 41, 13, 129, 91, 97, 20, 33], 'right');
column('G', 4, '21,410 8,370 3,858 21,752 13,835 32,761 9,360 2,109 382 10,319 1,534 32,622 6,461 31,873 23,016 2,392 24,477'.split(' '), 'right money');

// Grand totals
put('F26', 'Count of Order ID', 'ph');
put('G26', 'Sum of Sales', 'ph');
put('H26', 'Sum of Profit', 'ph');
put('F27', '1015', 'right');
put('G27', '246,530.09', 'right money');
put('H27', '20,116.01', 'right money');

// Pivot 3: ship mode
put('I3', 'Ship Mode', 'ph', { drop: true });
put('J3', 'Sum of Profit', 'ph');
column('I', 4, ['First Class', 'Same Day', 'Second Class', 'Standard Class']);
column('J', 4, ['5111.4774', '-2832.7894', '4338.6835', '13498.6338'], 'right');

// Pivot 4: state
put('M3', 'State', 'ph active', { drop: true });
put('N3', 'Count of Order ID', 'ph');
const states = 'Alabama 4,Arizona 23,Arkansas 2,California 183,Colorado 35,Connecticut 6,Delaware 8,Florida 42,Georgia 8,Illinois 52,Indiana 10,Iowa 8,Kentucky 18,Louisiana 9,Maryland 1,Massachusetts 8,Michigan 42,Minnesota 21,Mississippi 6,Missouri 3,Montana 4,Nebraska 4,Nevada 1,New Hampshire 4,New Jersey 16,New Mexico 2,New York 135,North Carolina 22,Ohio 54,Oklahoma 3,Oregon 9,Pennsylvania 79,Rhode Island 2,South Carolina 2,Tennessee 10,Texas 92,Utah 5,Virginia 18,Washington 44,Wisconsin 20'.split(',');
states.forEach((s, i) => {
  const cut = s.lastIndexOf(' ');
  put('M' + (4 + i), s.slice(0, cut));
  put('N' + (4 + i), s.slice(cut + 1), 'right');
});

// Pivot 5: year / month
put('Q3', 'Year', 'ph', { drop: true });
put('R3', 'Order Date', 'ph', { drop: true });
put('S3', 'Sum of Sales', 'ph pad');
const months = 'Jan Feb Mar Apr May Jun Jul Aug Sep Oct Nov Dec'.split(' ');
const sales = '1,981 1,183 861 788 5,167 11,314 2,926 3,722 20,445 4,767 11,556 4,952 2,171 858 8,834 2,524 2,507 582 985 3,982 8,954 4,222 6,055 5,605 1,090 434 1,415 7,406 5,358 7,274 2,341 2,460 16,820 4,268 3,514 16,588 8,712 398 1,215 2,791 3,374 5,316 591 2,918 5,920'.split(' ');
sales.forEach((v, i) => {
  const first = i % 12 === 0;
  put('Q' + (4 + i), first ? 2016 + i / 12 : '', 'fill yr', { tog: first });
  put('R' + (4 + i), months[i % 12]);
  put('S' + (4 + i), v, 'right money');
});

const cellHtml = (ref) => {
  const c = cells[ref];
  if (!c) return '<td></td>';
  const tog = c.tog ? '<i class="tog"></i>' : '';
  const body = c.drop ? `<div class="cell">${c.text}<i class="drop-btn"></i></div>` : tog + c.text;
  return `<td class="${c.cls || ''}">${body}</td>`;
};

let html = '<colgroup><col style="width:23px">' + widths.map((w) => `<col style="width:${w}px">`).join('') + '</colgroup>';
html += '<tr class="head"><th class="corner"></th>' + cols.map((c) => `<th class="${c === 'M' ? 'sel' : ''}">${c}</th>`).join('') + '</tr>';
for (let r = 1; r <= 48; r++) {
  html += `<tr><th class="num${r === 3 ? ' sel' : ''}">${r}</th>` + cols.map((c) => cellHtml(c + r)).join('') + '</tr>';
}
document.getElementById('sheet').innerHTML = html;

const checked = ['Order ID', 'State'];
const tick = '<svg width="11" height="11" viewBox="0 0 11 11" fill="none" stroke="#555" stroke-width="1.500"><path d="M2 5.500l2.500 3L9.500 2"/></svg>';
document.getElementById('fields').innerHTML = ['Row ID', 'Order ID', 'Order Date', 'Ship Mode', 'Customer Name', 'City', 'State', 'Region', 'Category', 'Sub-Category', 'Product Name', 'Sales', 'Quantity', 'Discount', 'Profit']
  .map((f) => { const on = checked.includes(f); return `<li class="${on ? 'on' : ''}"><i class="cb">${on ? tick : ''}</i>${f}</li>`; }).join('');
```
